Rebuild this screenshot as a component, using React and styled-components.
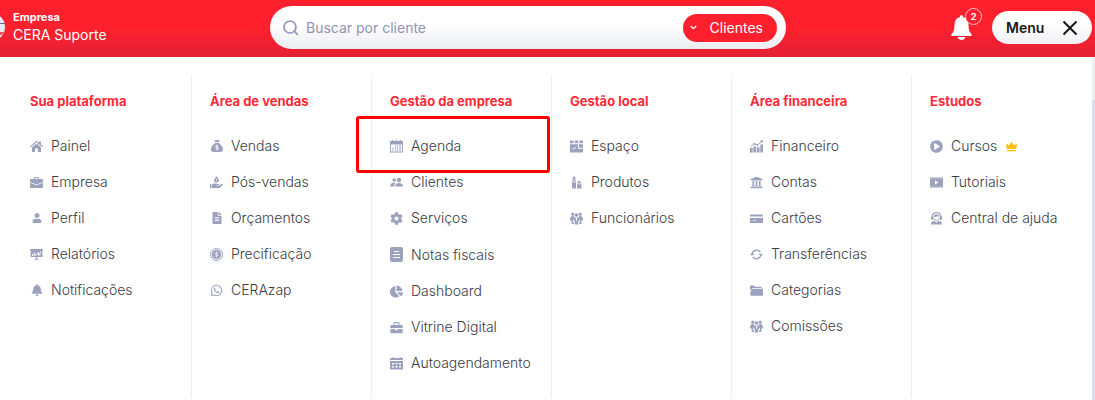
import React from "react";
import styled, { createGlobalStyle, css } from "styled-components";
import {
  FaUser,
  FaBell,
  FaFileAlt,
  FaWhatsapp,
  FaCog,
  FaChartPie,
  FaUniversity,
  FaPlayCircle
} from "react-icons/fa";
import { FaSackDollar } from "react-icons/fa6";

const GlobalStyle = createGlobalStyle`
  * {
    box-sizing: border-box;
  }

  body {
    margin: 0;
    background: linear-gradient(#ededf5 100px, #dadcec 100px) no-repeat #dadcec;
    color: #3b3b46;
    font-family: Inter, "Open Sans", sans-serif;
    font-size: 14px;
  }

  button,
  input {
    font: inherit;
  }
`;

const Header = styled.header`
  display: grid;
  grid-template-columns: 270px minmax(0, 1fr) 309px;
  align-items: center;
  height: 57px;
  background: linear-gradient(#ff202d 45%, #e32034);
`;

const Brand = styled.div`
  display: flex;
  align-items: center;
  gap: 8px;
  padding-bottom: 4px;
  color: #fff;
`;

const Avatar = styled.svg`
  flex: none;
  width: 28px;
  height: 28px;
  margin-left: -23px;
`;

const BrandLabel = styled.div`
  font-size: 11px;
  font-weight: 700;
  line-height: 16px;
`;

const BrandName = styled.div`
  line-height: 20px;
`;

const Search = styled.form`
  display: flex;
  align-items: center;
  height: 43px;
  margin-bottom: 2px;
  padding: 0 9px 0 12px;
  border-radius: 22px;
  background: linear-gradient(#fff 45%, #ebecf1);
`;

const SearchIcon = styled.svg`
  flex: none;
  width: 17px;
  height: 17px;
`;

const SearchInput = styled.input`
  flex: 1;
  min-width: 0;
  padding: 0 7px;
  border: 0;
  outline: 0;
  background: none;

  &::placeholder {
    color: #8f94b2;
    opacity: 1;
  }
`;

const FilterButton = styled.button`
  display: flex;
  align-items: center;
  justify-content: space-between;
  width: 94px;
  height: 28px;
  padding: 0 14px 0 6px;
  border: 0;
  border-radius: 14px;
  background: #ff202d;
  color: #fff;
`;

const Actions = styled.div`
  display: flex;
  align-items: center;
  justify-content: flex-end;
  gap: 20px;
  padding: 0 3px 2px 0;
`;

const BellButton = styled.button`
  position: relative;
  display: flex;
  padding: 0;
  border: 0;
  background: none;
  color: #fff;
`;

const Badge = styled.span`
  position: absolute;
  top: -7px;
  right: -10px;
  width: 17px;
  height: 17px;
  border: 1px solid #ffc4c8;
  border-radius: 50%;
  background: #ff202d;
  font-size: 9px;
  font-weight: 700;
  line-height: 15px;
  text-align: center;
`;

const MenuButton = styled.button`
  display: flex;
  align-items: center;
  justify-content: space-between;
  width: 100px;
  height: 33px;
  padding: 0 14px;
  border: 0;
  border-radius: 17px;
  background: linear-gradient(#fff 35%, #f0f0f3);
  color: #16161c;
  font-weight: 600;
`;

const Panel = styled.nav`
  display: grid;
  grid-template-columns: repeat(6, minmax(0, 1fr));
  min-height: 343px;
  margin-right: 3px;
  padding: 18px 0 2px 12px;
  background: #fff;
`;

const Column = styled.section`
  padding: 16px 0 28px 18px;
  border-right: 1px solid #ecedf6;

  &:last-child {
    border-right-color: transparent;
  }
`;

const ColumnTitle = styled.h2`
  margin: 0 0 28px;
  color: #ff2a37;
  font-size: 13px;
  font-weight: 700;
  line-height: 20px;
`;

const List = styled.ul`
  display: flex;
  flex-direction: column;
  gap: 22px;
  margin: 0;
  padding: 0;
  list-style: none;
`;

const IconSlot = styled.span`
  display: flex;
  flex: none;
  justify-content: center;
  width: 13px;
  color: #9ca1be;
`;

const Item = styled.a`
  position: relative;
  display: flex;
  align-items: center;
  gap: 8px;
  color: inherit;
  line-height: 14px;
  font-weight: 300;
  text-decoration: none;
  white-space: nowrap;

  ${({ $highlighted }) =>
    $highlighted &&
    css`
      &::after {
        content: "";
        position: absolute;
        inset: -23px 1px -20px -34px;
        border: 3px solid #ff0000;
        border-radius: 3px;
      }
    `}
`;

const CrownSlot = styled(IconSlot)`
  color: #ffbe0b;
`;

const Glyph = ({ height = 13, children }) => (
  <svg
    width="13"
    height={height}
    viewBox={`0 0 13 ${height}`}
    fill="currentColor"
    aria-hidden="true"
  >
    {children}
  </svg>
);

const House = () => (
  <Glyph>
    <path d="M6.5.8L9 2.9V1.5h2v3.1l2 1.8-.7.9-5.8-5-5.8 5-.7-.9z" />
    <path d="M6.5 3.4L11 7.2V12H7.900V8.400H5.100V12H2V7.200z" />
  </Glyph>
);

const Briefcase = () => (
  <Glyph>
    <path d="M4 3V2q0-1 1-1h3q1 0 1 1v1h3.2q.8 0 .8.8V6L6.5 8.4 0 6V3.800Q0 3 .8 3zm1 0h3V2H5zM0 6.800l6.500 2.400L13 6.800v4.300q0 .8-.8.8H.8q-.8 0-.8-.8z" />
  </Glyph>
);

const Presentation = () => (
  <Glyph>
    <path d="M0 1h13v1.3h-.6V9H7.1v1.2l2 2h-1.4L6.5 11l-1.2 1.2H3.9l2-2V9H.6V2.3H0z" />
    <path d="M2 6h1v2H2zM3.8 4.5h1V8h-1zM5.5 5.5h.8V8h-.8z" fill="#fff" />
    <path
      d="M9.1 3.9a1.8 1.8 0 1 0 1.8 1.8H9.1zM9.9 3.4v1.5h1.5q0-1.5-1.5-1.5z"
      fill="#fff"
    />
  </Glyph>
);

const HandMoney = () => (
  <Glyph>
    <path d="M5.4.4h2.3l-.5 1.4Q9 3 9 4.7 9 6.3 7.5 6.3h-2Q4 6.3 4 4.7q0-1.7 1.8-2.9z" />
    <path d="M6.2 3h.7v2h-.7z" fill="#fff" />
    <path d="M0 8h1.4v4.5H0zM2 8.3l2-.9h2.5l1 .7h1.2q.8 0 .8.7t-.9.7H6.2v.5h2.6l2.9-1.9q.8-.4 1.1.2t-.3 1.1l-3.4 2.7H2z" />
  </Glyph>
);

const Coin = () => (
  <Glyph>
    <circle cx="6.5" cy="6.5" r="6" fill="none" stroke="currentColor" />
    <circle cx="6.5" cy="6.5" r="4.7" />
    <path
      d="M8.1 4.900H6q-.8 0-.8.8t.8.8h1.100q.8 0 .8.8t-.8.8H4.900M6.500 3.500v6"
      fill="none"
      stroke="#e6e8f2"
      strokeWidth=".8"
    />
  </Glyph>
);

const Agenda = () => (
  <Glyph>
    <path d="M2 0h1.4v1H6V0h1v1h2.6V0H11v1h2v11.500H0V1h2zm-1.100 4.500v7.100h11.200V4.500z" />
    <path d="M5 5.500h1.200v1.200H5zM7 5.500h1.200v1.200H7zM9.300 5.500h1.600v1.200H9.300zM2.300 7.500h1.200v1.200H2.300zM5 7.500h1.200v1.200H5zM7 7.500h1.200v1.200H7zM9.300 7.500h1.600v1.200H9.300zM2.300 9.500h1.200v1.200H2.300zM5 9.500h1.200v1.200H5zM7 9.500h1.200v1.200H7zM9.300 9.500h1.600v1.200H9.300z" />
  </Glyph>
);

const Calendar = () => (
  <Glyph>
    <path d="M0 1h2V.3h1.3V1h6.4V.3H11V1h2v2H0zM0 4h13v8.5H0z" />
    <path
      d="M2 6h2v1.500H2zM5.500 6h2v1.500h-2zM9 6h2v1.500H9zM2 9h2v1.500H2zM5.500 9h2v1.500h-2zM9 9h2v1.500H9z"
      fill="#fff"
    />
  </Glyph>
);

const People = () => (
  <Glyph>
    <circle cx="4.2" cy="4" r="1.8" />
    <circle cx="9" cy="4" r="2.2" />
    <path d="M0 10.500Q0 7 4 6.500l1.500.3Q4.200 8 4.200 10.500zM5.200 10.500Q5.200 7 9 7t4 3.500z" />
  </Glyph>
);

const Invoice = () => (
  <Glyph height={15}>
    <rect width="13" height="15" rx="2" />
    <path d="M4 4h5v1H4zM3 7h7v1H3zM3 10h7v1H3z" fill="#fff" />
  </Glyph>
);

const Toolbox = () => (
  <Glyph>
    <path d="M3.500 4V2.300Q3.500 1 4.800 1h3.400q1.300 0 1.300 1.300V4h2.700l.8 3H0l.8-3zm1 0h4V2.200h-4zM.4 8h4.800v1.300h2.600V8h4.800v3.500q0 .7-.7.7H1.100q-.7 0-.7-.7z" />
  </Glyph>
);

const Space = () => (
  <Glyph>
    <path d="M0 .5h3.500v2.800H0zM4.700.5h3.600v2.800H4.700zM9.500.5H13v2.800H9.500zM0 4.300h8v4.400h5v3.800H0zM9 4.300h4v3.400H9z" />
    <path d="M2.400 8l1.300 1.400L6.300 6.800" fill="none" stroke="#fff" />
  </Glyph>
);

const Bottles = () => (
  <Glyph>
    <path d="M3 .5h2v2h1v1H2v-1h1zM2 4.200h4v1.200H2zM2 6.200h4v6.300H2zM8.200 4.700h1.700v1.800h1.500v1H7v-1h1.200zM7 8.200h4.400v4.300H7z" />
  </Glyph>
);

const Team = () => (
  <Glyph>
    <circle cx="2.8" cy="2.2" r="1.6" />
    <circle cx="10.2" cy="2.2" r="1.6" />
    <circle cx="6.5" cy="3" r="1.8" />
    <path d="M0 8q0-4 2.700-4 1.200 0 1.800.7L3 8.500 4 12H1.700V9zM13 8q0-4-2.700-4-1.200 0-1.800.7L10 8.500 9 12h2.300V9zM4.500 5.500h4q.8 0 1 1L9 9h-.8v3.600H4.800V9H4l-.5-2.500q.2-1 1-1z" />
    <path d="M6.100 5.500h.8l.3 2.500-.7 1-.7-1z" fill="#fff" />
  </Glyph>
);

const Growth = () => (
  <Glyph>
    <path d="M0 8h2.700v4.500H0zM3.400 6.500h2.800v6H3.400zM6.900 7.200h2.700v5.300H6.900zM10.300 4.500H13v8h-2.700z" />
    <path d="M1 6.700l3.300-3 3 1.500 4.500-4" fill="none" stroke="currentColor" />
    <circle cx="4.300" cy="3.800" r="1" />
    <circle cx="7.400" cy="5" r="1" />
    <circle cx="11.800" cy="1.300" r="1.200" />
  </Glyph>
);

const Card = () => (
  <Glyph>
    <path d="M.7 2.500h11.600q.7 0 .7.7v1.300H0V3.200q0-.7.7-.7zM0 6h13v4.300q0 .7-.7.7H.7q-.7 0-.7-.7z" />
    <path d="M1.500 8h1v1h-1zM3.300 8h3v1h-3z" fill="#d5d8e8" />
  </Glyph>
);

const Transfer = () => (
  <Glyph>
    <path
      d="M2.200 6a4.400 4.400 0 0 1 8-1.900M10.800 7a4.400 4.400 0 0 1-8 1.900"
      fill="none"
      stroke="currentColor"
      strokeWidth="1.4"
    />
    <path d="M0 7.200l2.200-2.600 2.200 2.600zM8.600 5.800H13l-2.200 2.600z" />
  </Glyph>
);

const Folder = () => (
  <Glyph>
    <path d="M0 2.200q0-.7.7-.7h3l1.200 1.200h6q.7 0 .7.700V4H1.700v4.500L0 5z" />
    <path d="M2.200 4.700H13V11q0 .7-.7.7H1q-.7 0-.7-.7V8.500z" />
  </Glyph>
);

const Video = () => (
  <Glyph>
    <path d="M0 1.500h13v10H0z" />
    <path d="M5 4.500l3.700 2L5 8.500z" fill="#fff" />
    <path
      d="M0 2.800h13M0 10.300h13"
      stroke="#d5d8e8"
      strokeWidth=".6"
      strokeDasharray="1 .8"
    />
  </Glyph>
);

const Support = () => (
  <Glyph>
    <path
      d="M2.200 6V4.800a4.300 4.300 0 0 1 8.600 0V6"
      fill="none"
      stroke="currentColor"
      strokeWidth="1.200"
    />
    <path d="M1 4.500h2.300v3.300H2L1 7zM9.700 4.500H12V7l-1 .8H9.700zM3.800 4.800q0-2.600 2.700-2.600t2.700 2.600L7.800 4.200 5 5z" />
    <path
      d="M4 6.400q.6 2.100 2.500 2.100T9.300 6.400"
      fill="none"
      stroke="currentColor"
    />
    <path d="M1 12.500q0-3.200 3.300-3.600l2.200 1.600 2.200-1.600q3.300.4 3.300 3.600z" />
  </Glyph>
);

const Crown = () => (
  <Glyph>
    <path d="M1 3.500l2.700 2L6.500 2l2.800 3.500 2.700-2-.8 5.500H1.800zM1.800 10h9.400v1.300H1.800z" />
  </Glyph>
);

const columns = [
  {
    title: "Sua plataforma",
    items: [
      { label: "Painel", icon: House },
      { label: "Empresa", icon: Briefcase },
      { label: "Perfil", icon: FaUser, size: 10 },
      { label: "Relatórios", icon: Presentation },
      { label: "Notificações", icon: FaBell, size: 12 }
    ]
  },
  {
    title: "Área de vendas",
    items: [
      { label: "Vendas", icon: FaSackDollar, size: 12 },
      { label: "Pós-vendas", icon: HandMoney },
      { label: "Orçamentos", icon: FaFileAlt, size: 12 },
      { label: "Precificação", icon: Coin },
      { label: "CERAzap", icon: FaWhatsapp }
    ]
  },
  {
    title: "Gestão da empresa",
    items: [
      { label: "Agenda", icon: Agenda, highlighted: true },
      { label: "Clientes", icon: People },
      { label: "Serviços", icon: FaCog },
      { label: "Notas fiscais", icon: Invoice },
      { label: "Dashboard", icon: FaChartPie },
      { label: "Vitrine Digital", icon: Toolbox },
      { label: "Autoagendamento", icon: Calendar }
    ]
  },
  {
    title: "Gestão local",
    items: [
      { label: "Espaço", icon: Space },
      { label: "Produtos", icon: Bottles },
      { label: "Funcionários", icon: Team }
    ]
  },
  {
    title: "Área financeira",
    items: [
      { label: "Financeiro", icon: Growth },
      { label: "Contas", icon: FaUniversity },
      { label: "Cartões", icon: Card },
      { label: "Transferências", icon: Transfer },
      { label: "Categorias", icon: Folder },
      { label: "Comissões", icon: Team }
    ]
  },
  {
    title: "Estudos",
    items: [
      { label: "Cursos", icon: FaPlayCircle, premium: true },
      { label: "Tutoriais", icon: Video },
      { label: "Central de ajuda", icon: Support }
    ]
  }
];

const MenuItem = ({ label, icon: Icon, size = 13, highlighted, premium }) => (
  <li>
    <Item href="#" $highlighted={highlighted}>
      <IconSlot>
        <Icon size={size} />
      </IconSlot>
      {label}
      {premium && (
        <CrownSlot>
          <Crown />
        </CrownSlot>
      )}
    </Item>
  </li>
);

const App = () => {
  return (
    <>
      <GlobalStyle />
      <Header>
        <Brand>
          <Avatar viewBox="0 0 28 28" aria-hidden="true">
            <circle cx="14" cy="14" r="14" fill="#e6e8f3" />
            <path d="M14 10.500h14" stroke="#66687a" />
            <path d="M18 19h9l-2 3h-7z" fill="#ef5561" />
          </Avatar>
          <div>
            <BrandLabel>Empresa</BrandLabel>
            <BrandName>CERA Suporte</BrandName>
          </div>
        </Brand>
        <Search role="search">
          <SearchIcon
            viewBox="0 0 17 17"
            fill="none"
            stroke="#9096b8"
            strokeWidth="1.700"
            aria-hidden="true"
          >
            <circle cx="8" cy="8" r="6" />
            <path d="M12.200 12.200l3.300 3.300" strokeLinecap="round" />
          </SearchIcon>
          <SearchInput
            type="text"
            aria-label="Buscar por cliente"
            placeholder="Buscar por cliente"
          />
          <FilterButton type="button">
            <svg
              width="9"
              height="9"
              viewBox="0 0 9 9"
              fill="none"
              stroke="currentColor"
              strokeWidth="1.300"
              aria-hidden="true"
            >
              <path d="M1.800 3l2.700 2.700L7.200 3" />
            </svg>
            Clientes
          </FilterButton>
        </Search>
        <Actions>
          <BellButton type="button" aria-label="Notificações">
            <svg
              width="21"
              height="25"
              viewBox="0 0 21 25"
              fill="currentColor"
              aria-hidden="true"
            >
              <path d="M9 2q0-2 1.500-2T12 2q5.500 1.600 5.500 8 0 6.500 3 9 1 2-1 2h-18q-2 0-1-2 3-2.500 3-9Q3.500 3.600 9 2zM6.500 22h8q-1 3-4 3t-4-3z" />
            </svg>
            <Badge>2</Badge>
          </BellButton>
          <MenuButton type="button">
            Menu
            <svg
              width="16"
              height="16"
              viewBox="0 0 16 16"
              stroke="currentColor"
              strokeWidth="2"
              aria-hidden="true"
            >
              <path d="M1.500 1.500l13 13M14.500 1.500l-13 13" />
            </svg>
          </MenuButton>
        </Actions>
      </Header>
      <Panel>
        {columns.map(({ title, items }) => (
          <Column key={title}>
            <ColumnTitle>{title}</ColumnTitle>
            <List>
              {items.map(item => (
                <MenuItem key={item.label} {...item} />
              ))}
            </List>
          </Column>
        ))}
      </Panel>
    </>
  );
};

export default App;
